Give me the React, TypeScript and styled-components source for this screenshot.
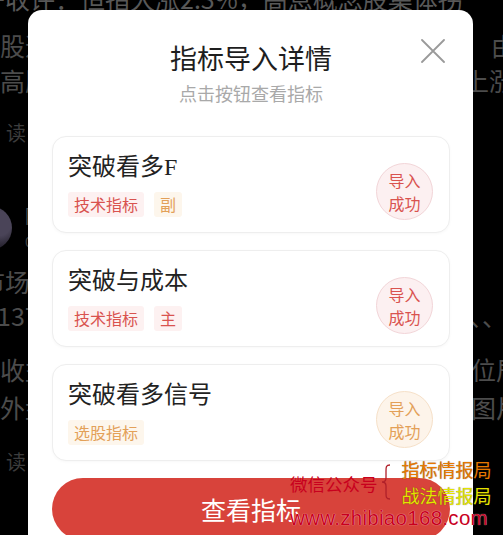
import React from "react";
import styled, { createGlobalStyle } from "styled-components";

const Global = createGlobalStyle`
  html, body { margin: 0; padding: 0; background: #000; }
  body {
    width: 503px;
    height: 535px;
    overflow: hidden;
    font-family: "Noto Sans CJK SC", "Noto Sans", sans-serif;
  }
`;

const Screen = styled.div`
  position: relative;
  width: 503px;
  height: 535px;
  overflow: hidden;
  background: #000;
`;

/* ---------- background feed (dimmed behind the dialog) ---------- */
const Feed = styled.div`
  display: flex;
  flex-direction: column;
  margin-top: -19px;
  color: #4c4c4c;
  font-size: 25px;
`;

const Line = styled.div<{ $mt?: number }>`
  display: flex;
  justify-content: space-between;
  align-items: center;
  height: 34px;
  line-height: 34px;
  margin-top: ${(p) => p.$mt ?? 0}px;
  white-space: nowrap;
`;

const Side = styled.span<{ $shift?: number; $size?: number; $color?: string }>`
  flex: none;
  margin-left: ${(p) => (p.$shift && p.$shift < 0 ? p.$shift : 0)}px;
  margin-right: ${(p) => (p.$shift && p.$shift > 0 ? -p.$shift : 0)}px;
  font-size: ${(p) => p.$size ?? 25}px;
  color: ${(p) => p.$color ?? "inherit"};
`;

const ReadMark = styled.span`
  margin-left: 6px;
  font-size: 20px;
  color: #3c3c3c;
`;

const AuthorRow = styled.div<{ $mt?: number }>`
  display: flex;
  align-items: center;
  gap: 13px;
  height: 50px;
  margin-top: ${(p) => p.$mt ?? 0}px;
`;

const Avatar = styled.div`
  width: 44px;
  height: 44px;
  margin-left: -32px;
  border-radius: 50%;
  background: radial-gradient(circle at 70% 40%, #4a4458 0 30%, #2a2633 55%, #1a1820 100%);
`;

const AuthorText = styled.div`
  display: flex;
  flex-direction: column;
  gap: 6px;
  line-height: 20px;
`;

const AuthorName = styled.span`
  font-size: 18px;
  color: #555;
`;

const AuthorMeta = styled.span`
  font-size: 14px;
  color: #444;
`;

/* ---------- dialog ---------- */
const Overlay = styled.div`
  position: absolute;
  inset: 0;
  display: flex;
  align-items: flex-start;
  padding: 10px 0 0 28px;
`;

const Dialog = styled.div`
  position: relative;
  width: 445px;
  background: #fff;
  border-radius: 14px;
  padding: 30px 23px 30px 24px;
  box-sizing: border-box;
`;

const Header = styled.div`
  display: flex;
  flex-direction: column;
  align-items: center;
`;

const Title = styled.h1`
  margin: 0;
  font-size: 27px;
  line-height: 36px;
  font-weight: 400;
  color: #1e1e1e;
`;

const Subtitle = styled.p`
  margin: 5px 0 0;
  font-size: 18px;
  line-height: 24px;
  color: #a9a9a9;
`;

const CloseButton = styled.button`
  position: absolute;
  top: 28px;
  right: 27px;
  width: 26px;
  height: 26px;
  padding: 0;
  border: 0;
  background: none;
  display: flex;
  align-items: center;
  justify-content: center;
`;

const CardList = styled.div`
  display: flex;
  flex-direction: column;
  gap: 17px;
  margin-top: 31px;
`;

const Card = styled.div`
  display: flex;
  align-items: center;
  justify-content: space-between;
  height: 97px;
  box-sizing: border-box;
  padding: 15px 16px 15px 15px;
  border: 1px solid #eeeeee;
  border-radius: 14px;
  background: #fff;
  box-shadow: 0 1px 3px rgba(0, 0, 0, 0.03);
`;

const CardMain = styled.div`
  display: flex;
  flex-direction: column;
`;

const CardTitle = styled.div`
  font-family: "Liberation Serif", "Noto Sans CJK SC", serif;
  font-size: 24px;
  line-height: 30px;
  color: #222;
`;

const Tags = styled.div`
  display: flex;
  gap: 10px;
  margin-top: 10px;
`;

type Tone = "red" | "orange";

const toneText: Record<Tone, string> = { red: "#d9534f", orange: "#e3a058" };
const toneBg: Record<Tone, string> = { red: "#fdf1f1", orange: "#fdf6ec" };
const toneCircleBg: Record<Tone, string> = { red: "#fcf0f1", orange: "#fdf4ea" };
const toneCircleBorder: Record<Tone, string> = { red: "#f2d5d8", orange: "#f6e0c8" };

const Tag = styled.span<{ $tone: Tone }>`
  font-size: 16px;
  line-height: 25px;
  padding: 0 6px;
  border-radius: 3px;
  color: ${(p) => toneText[p.$tone]};
  background: ${(p) => toneBg[p.$tone]};
`;

const Status = styled.div<{ $tone: Tone }>`
  flex: none;
  width: 57px;
  height: 57px;
  margin-top: 14px;
  box-sizing: border-box;
  border-radius: 50%;
  border: 1px solid ${(p) => toneCircleBorder[p.$tone]};
  background: ${(p) => toneCircleBg[p.$tone]};
  color: ${(p) => toneText[p.$tone]};
  display: flex;
  flex-direction: column;
  align-items: center;
  justify-content: center;
  font-size: 16px;
  line-height: 23px;
`;

const ViewButton = styled.button`
  display: flex;
  align-items: center;
  justify-content: center;
  width: 100%;
  height: 62px;
  margin-top: 17px;
  border: 0;
  border-radius: 31px;
  background: #d8433b;
  color: #fff;
  font-family: "Noto Sans CJK SC", sans-serif;
  font-size: 25px;
`;

/* ---------- watermark stamped over the picture ---------- */
const Watermark = styled.div`
  position: absolute;
  left: 290px;
  top: 456px;
  display: flex;
  flex-direction: column;
  font-family: "Noto Sans CJK SC", sans-serif;
  white-space: nowrap;
`;

const WmTop = styled.div`
  display: flex;
  align-items: center;
  height: 52px;
`;

const WmLabel = styled.span`
  font-size: 17.5px;
  color: #c8001e;
  margin-top: 2px;
`;

const WmStack = styled.div`
  display: flex;
  flex-direction: column;
  margin-left: 6px;
  line-height: 26px;
  font-size: 18px;
`;

const WmName = styled.span<{ $color: string }>`
  color: ${(p) => p.$color};
  text-shadow: 0 0 1px rgba(60, 40, 0, 0.7);
`;

const WmUrl = styled.span`
  margin-top: -1px;
  font-family: "Liberation Sans", sans-serif;
  font-size: 20.5px;
  letter-spacing: 0.3px;
  line-height: 22px;
  color: #c8001e;
  text-shadow: 0 0 1px rgba(255, 255, 255, 0.9);
`;

const cards: { name: string; tags: { label: string; tone: Tone }[]; tone: Tone }[] = [
  { name: "突破看多F", tags: [{ label: "技术指标", tone: "red" }, { label: "副", tone: "orange" }], tone: "red" },
  { name: "突破与成本", tags: [{ label: "技术指标", tone: "red" }, { label: "主", tone: "red" }], tone: "red" },
  { name: "突破看多信号", tags: [{ label: "选股指标", tone: "orange" }], tone: "orange" },
];

export default function App() {
  return (
    <Screen>
      <Global />
      <Feed>
        <Line>
          <Side $shift={-20} $color="#585858">午收评：恒指大涨2.3%，高息概念股集体拐</Side>
        </Line>
        <Line $mt={13}>
          <Side>股道</Side>
          <Side $shift={13}>由</Side>
        </Line>
        <Line $mt={1}>
          <Side>高股</Side>
          <Side $shift={11}>上涨</Side>
        </Line>
        <Line $mt={19}>
          <ReadMark>读</ReadMark>
        </Line>
        <AuthorRow $mt={53}>
          <Avatar />
          <AuthorText>
            <AuthorName>阿</AuthorName>
            <AuthorMeta>08:30</AuthorMeta>
          </AuthorText>
        </AuthorRow>
        <Line $mt={11}>
          <Side $shift={-20}>市场</Side>
        </Line>
        <Line>
          <Side $shift={-3}>137</Side>
          <Side $shift={4}>、、</Side>
        </Line>
        <Line $mt={20}>
          <Side>收益</Side>
          <Side $shift={18}>位居</Side>
        </Line>
        <Line $mt={4}>
          <Side>外盘</Side>
          <Side $shift={18}>图片</Side>
        </Line>
        <Line $mt={21}>
          <ReadMark>读</ReadMark>
        </Line>
      </Feed>

      <Overlay>
        <Dialog>
          <Header>
            <Title>指标导入详情</Title>
            <Subtitle>点击按钮查看指标</Subtitle>
          </Header>
          <CloseButton aria-label="关闭">
            <svg width="24" height="24" viewBox="0 0 24 24">
              <path d="M1 1 L23 23 M23 1 L1 23" stroke="#9a9a9a" strokeWidth="1.8" strokeLinecap="round" fill="none" />
            </svg>
          </CloseButton>
          <CardList>
            {cards.map((c) => (
              <Card key={c.name}>
                <CardMain>
                  <CardTitle>{c.name}</CardTitle>
                  <Tags>
                    {c.tags.map((t) => (
                      <Tag key={t.label} $tone={t.tone}>
                        {t.label}
                      </Tag>
                    ))}
                  </Tags>
                </CardMain>
                <Status $tone={c.tone}>
                  <span>导入</span>
                  <span>成功</span>
                </Status>
              </Card>
            ))}
          </CardList>
          <ViewButton>查看指标</ViewButton>
        </Dialog>
      </Overlay>

      <Watermark>
        <WmTop>
          <WmLabel>微信公众号</WmLabel>
          <svg width="18" height="38" viewBox="0 0 18 38">
            <path
              d="M12 2 C8 2 8 4 8 8 L8 15 C8 18 7 19 4 19 C7 19 8 20 8 23 L8 30 C8 34 8 36 12 36"
              stroke="#b0202a"
              strokeWidth="1.3"
              fill="none"
            />
          </svg>
          <WmStack>
            <WmName $color="#e87800">指标情报局</WmName>
            <WmName $color="#e4e400">战法情报局</WmName>
          </WmStack>
        </WmTop>
        <WmUrl>www.zhibiao168.com</WmUrl>
      </Watermark>
    </Screen>
  );
}
